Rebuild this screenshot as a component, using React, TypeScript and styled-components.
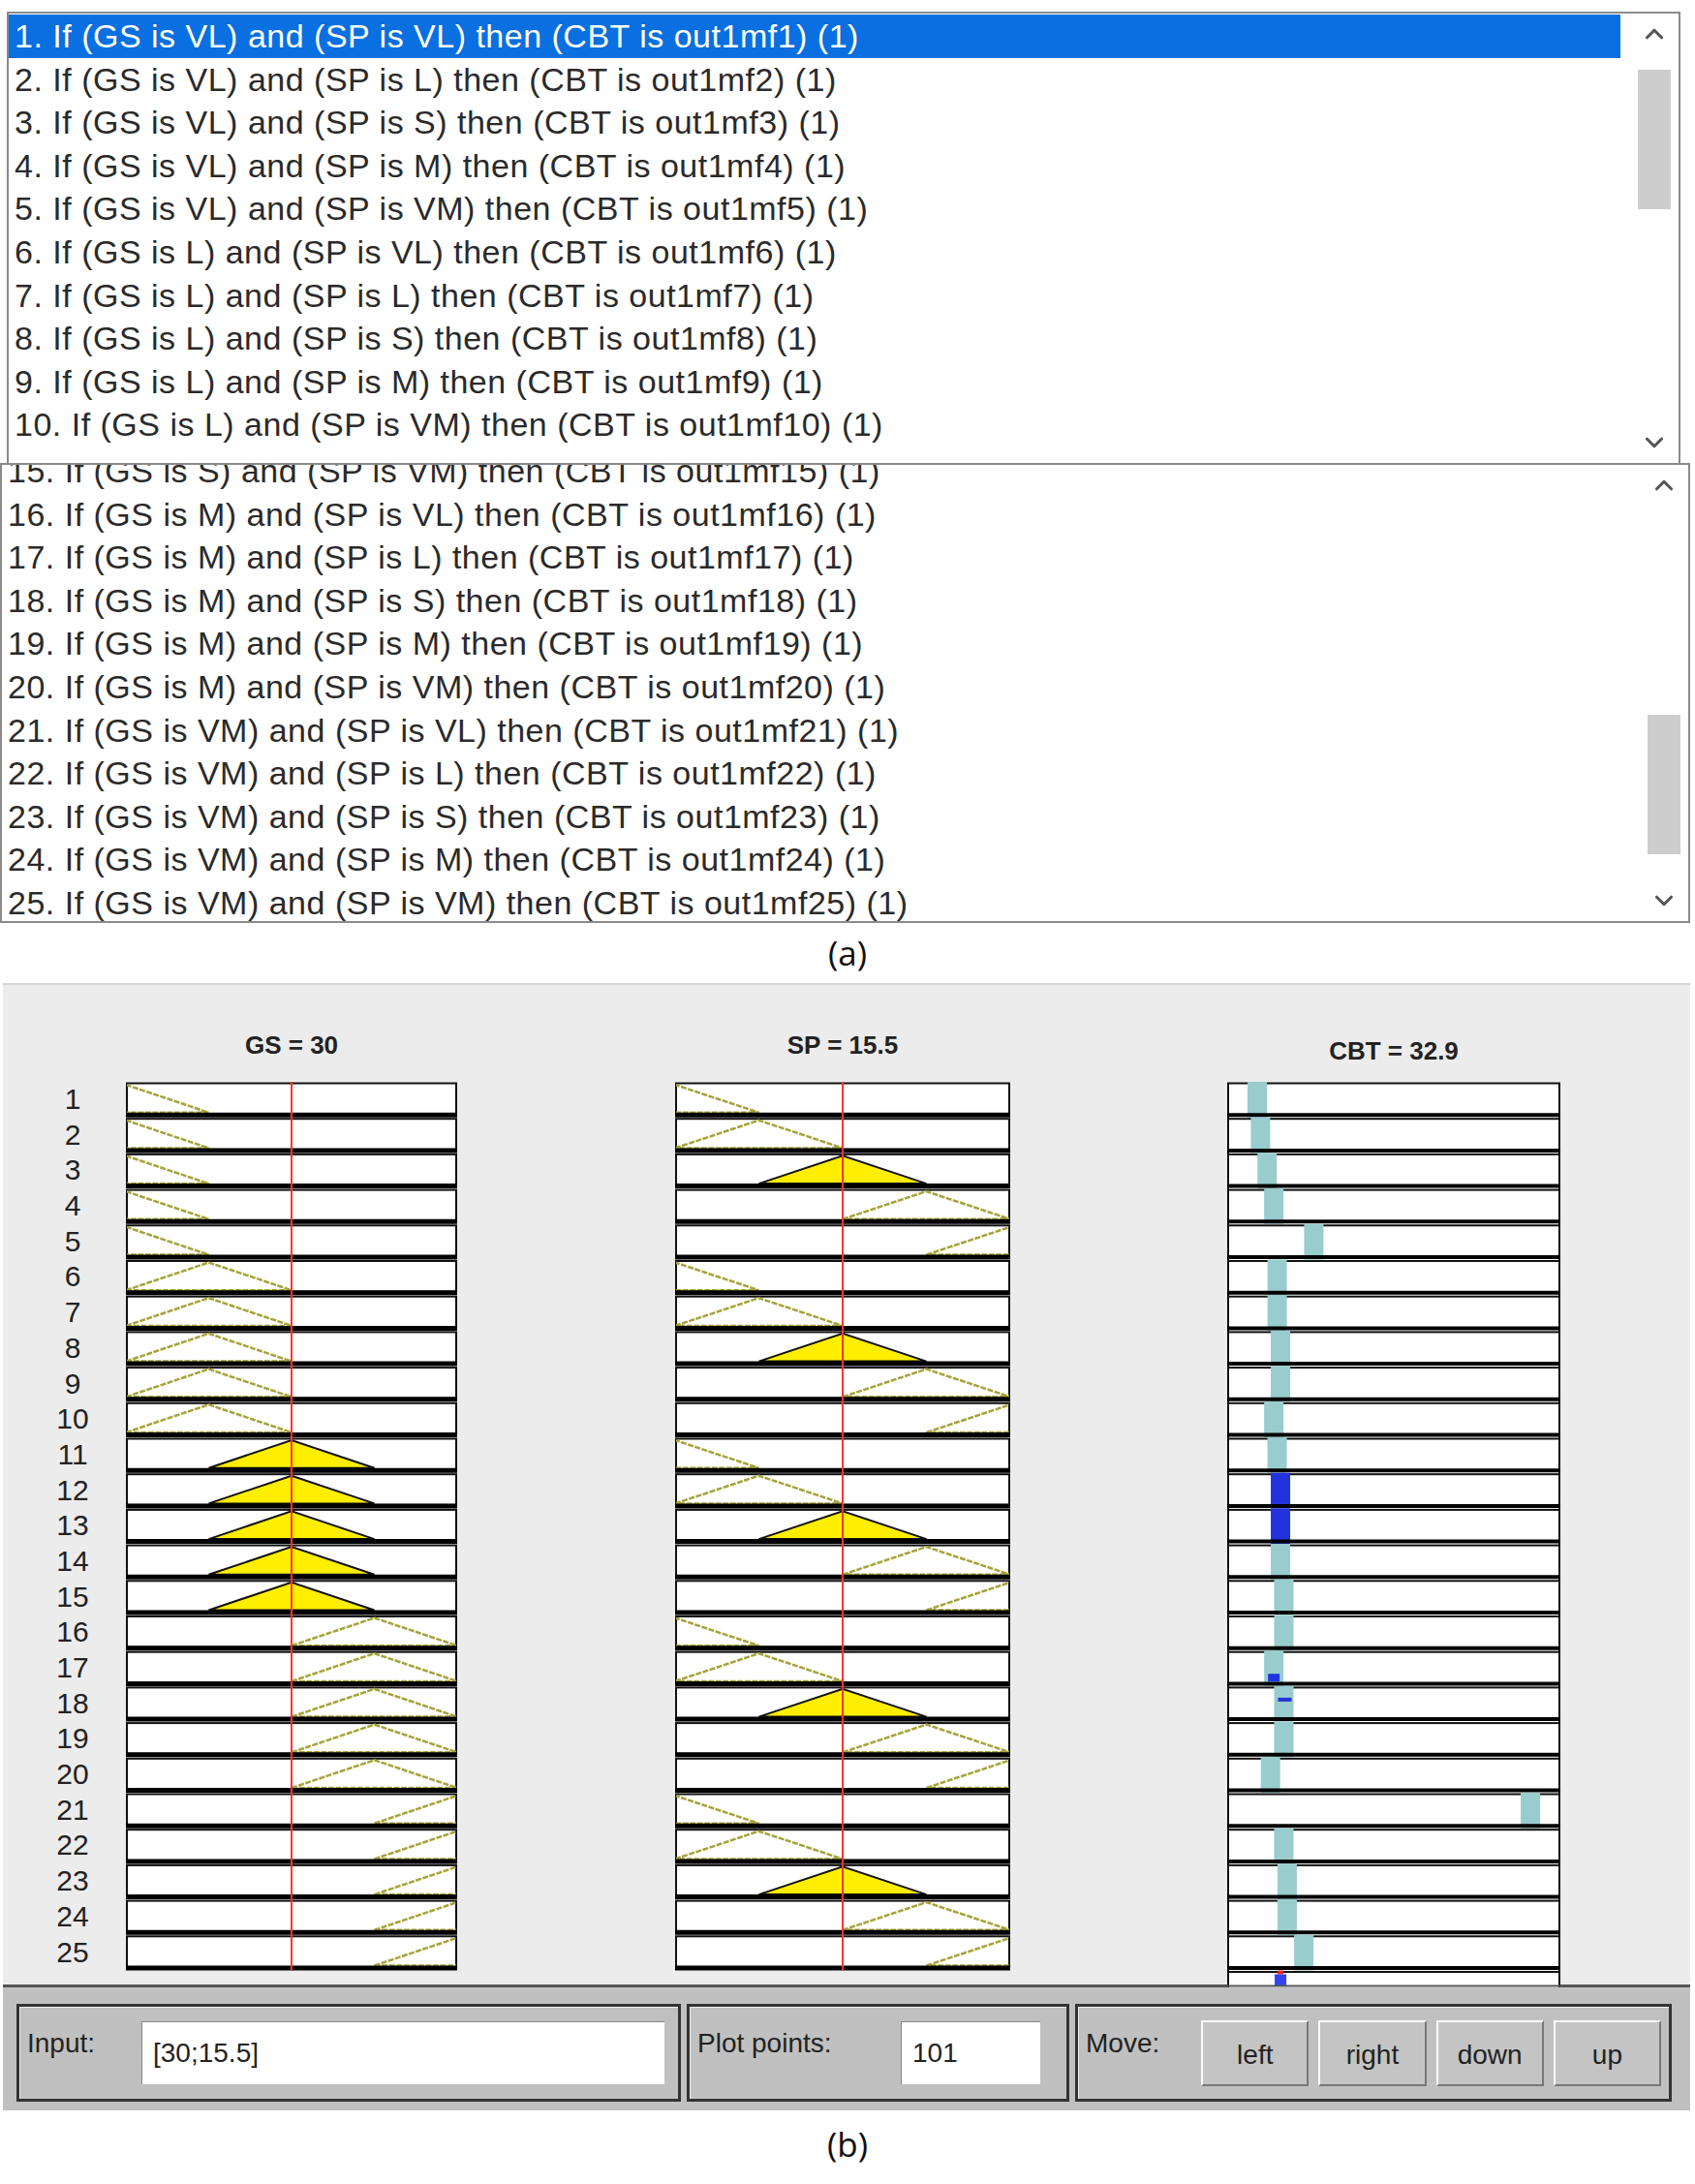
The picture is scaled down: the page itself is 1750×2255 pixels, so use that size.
import React from "react";
import styled, { createGlobalStyle } from "styled-components";
import { ChevronUp, ChevronDown } from "lucide-react";

const Global = createGlobalStyle`
  body { margin: 0; background: #fff; font-family: "Liberation Sans", Arial, sans-serif; }
`;

const GS = ["VL", "VL", "VL", "VL", "VL", "L", "L", "L", "L", "L", "S", "S", "S", "S", "S", "M", "M", "M", "M", "M", "VM", "VM", "VM", "VM", "VM"];
const SPS = ["VL", "L", "S", "M", "VM"];
const rule = (i: number) =>
  `${i + 1}. If (GS is ${GS[i]}) and (SP is ${SPS[i % 5]}) then (CBT is out1mf${i + 1}) (1)`;

const ROW = 44.6;
const PITCH = 36.7;

const Page = styled.div`
  width: 1750px;
  height: 2255px;
  padding-top: 12px;
  box-sizing: border-box;
  overflow: hidden;
`;

const ListBox = styled.div<{ $left: number; $width: number; $height: number; $offset: number }>`
  position: relative;
  margin-left: ${(p) => p.$left}px;
  width: ${(p) => p.$width}px;
  height: ${(p) => p.$height}px;
  border: 2px solid #8a8a8a;
  box-sizing: border-box;
  background: #fff;
  overflow: hidden;
  display: flex;
  & > .rows { flex: 1; margin-top: ${(p) => p.$offset}px; }
`;

const Row = styled.div<{ $sel?: boolean }>`
  height: ${ROW}px;
  line-height: ${ROW}px;
  padding-left: 6px;
  font-size: 34px;
  letter-spacing: 0.5px;
  white-space: nowrap;
  color: ${(p) => (p.$sel ? "#fff" : "#2a2a2a")};
  background: ${(p) => (p.$sel ? "#0a6fe0" : "transparent")};
  margin-right: ${(p) => (p.$sel ? 10 : 0)}px;
`;

const Scroll = styled.div<{ $thumbTop: number }>`
  width: 50px;
  position: relative;
  color: #555;
  display: flex;
  flex-direction: column;
  justify-content: space-between;
  align-items: center;
  padding: 6px 0;
  &::after {
    content: "";
    position: absolute;
    left: 8px;
    right: 8px;
    top: ${(p) => p.$thumbTop}px;
    height: 144px;
    background: #cdcdcd;
  }
`;

const Caption = styled.div`
  font-family: "Open Sans", sans-serif;
  font-size: 35px;
  text-align: center;
  height: 62px;
  line-height: 62px;
  color: #111;
`;

const Panel = styled.div`
  width: 1742px;
  margin-left: 3px;
  background: #ececec;
  border-top: 2px solid #d6d6d6;
`;

const Plots = styled.div`
  display: flex;
  align-items: flex-start;
  padding: 44px 0 0 42px;
  height: 1032px;
  box-sizing: border-box;
`;

const Labels = styled.div`
  width: 60px;
  margin: 56px 25px 0 0;
  display: flex;
  flex-direction: column;
`;

const Label = styled.div`
  height: ${PITCH}px;
  line-height: ${PITCH}px;
  text-align: center;
  font-size: 30px;
  color: #222;
`;

const Column = styled.div<{ $gap: number; $w: number }>`
  width: ${(p) => p.$w}px;
  margin-right: ${(p) => p.$gap}px;
  display: flex;
  flex-direction: column;
`;

const Title = styled.div<{ $dy?: number }>`
  height: 36px;
  line-height: 36px;
  margin: ${(p) => p.$dy ?? 0}px 0 ${(p) => 20 - (p.$dy ?? 0)}px;
  text-align: center;
  font-weight: bold;
  font-size: 26px;
  color: #222;
`;

const Bar = styled.div`
  background: #c0c0c0;
  border-top: 3px solid #555;
  height: 130px;
  display: flex;
  gap: 6px;
  padding: 17px 17px 0 14px;
  box-sizing: border-box;
`;

const Group = styled.div<{ $w: number }>`
  width: ${(p) => p.$w}px;
  height: 101px;
  border: 3px solid #333;
  box-shadow: inset 1px 1px 0 #eee;
  box-sizing: border-box;
  display: flex;
  align-items: center;
  padding: 0 8px;
  gap: 10px;
  font-size: 28px;
  color: #222;
`;

const GLabel = styled.span<{ $w: number }>`
  width: ${(p) => p.$w}px;
  align-self: flex-start;
  margin-top: 22px;
`;

const Field = styled.div<{ $w: number }>`
  width: ${(p) => p.$w}px;
  height: 65px;
  background: #fff;
  line-height: 65px;
  padding-left: 12px;
  box-sizing: border-box;
  font-size: 28px;
  box-shadow: inset 1px 1px 0 #888;
`;

const Btn = styled.div`
  width: 112px;
  height: 68px;
  line-height: 68px;
  text-align: center;
  background: #c4c4c4;
  border: 2px solid;
  border-color: #fafafa #777 #777 #fafafa;
  box-sizing: border-box;
  font-size: 28px;
`;

const W = 342;
const H = 25 * PITCH;

function MFPlot({ mf, active, w }: { mf: (i: number) => number; active: number; w: number }) {
  const rows = [];
  for (let i = 0; i < 25; i++) {
    const y0 = i * PITCH;
    const top = y0 + 3;
    const bot = y0 + PITCH - 5;
    const c = mf(i) * 0.25;
    const pts = [c - 0.25, c, c + 0.25].map((f, k) => `${f * w},${k === 1 ? top : bot}`).join(" ");
    const on = mf(i) === active;
    rows.push(
      <g key={i}>
        <rect x={1} y={y0 + 1.5} width={w - 2} height={PITCH - 5} fill="#fff" stroke="#111" strokeWidth={2} />
        <clipPath id={`c${w}${i}`}>
          <rect x={1} y={y0} width={w - 2} height={PITCH} />
        </clipPath>
        <polygon
          points={pts}
          clipPath={`url(#c${w}${i})`}
          fill={on ? "#ffee00" : "none"}
          stroke={on ? "#111" : "#a5a33a"}
          strokeWidth={on ? 2 : 2.5}
          strokeDasharray={on ? undefined : "6 1.5"}
        />
        <line x1={0} x2={w} y1={y0 + PITCH - 2.5} y2={y0 + PITCH - 2.5} stroke="#000" strokeWidth={5} />
      </g>
    );
  }
  return (
    <svg width={w} height={H}>
      {rows}
      <line x1={w / 2} x2={w / 2} y1={0} y2={H} stroke="#f33" strokeWidth={2} />
    </svg>
  );
}

const CBT = [0.09, 0.1, 0.12, 0.14, 0.26, 0.15, 0.15, 0.16, 0.16, 0.14, 0.15, 0.16, 0.16, 0.16, 0.17, 0.17, 0.14, 0.17, 0.17, 0.13, 0.91, 0.17, 0.18, 0.18, 0.23];

function OutPlot() {
  const w = 344;
  const h = H + 17;
  return (
    <svg width={w} height={h}>
      {Array.from({ length: 26 }, (_, i) => {
        const y0 = i * PITCH;
        return (
          <g key={i}>
            <rect x={1} y={y0 + 1.5} width={w - 2} height={PITCH + 10} fill="#fff" stroke="#111" strokeWidth={2} />
            {i < 25 && (
              <rect
                x={CBT[i] * w - 10}
                y={y0}
                width={20}
                height={PITCH}
                fill={i === 11 || i === 12 ? "#2233dd" : "#99cccc"}
              />
            )}
            {i < 25 && <line x1={0} x2={w} y1={y0 + PITCH - 2.5} y2={y0 + PITCH - 2.5} stroke="#000" strokeWidth={4} />}
          </g>
        );
      })}
      <rect x={CBT[16] * w - 6} y={16 * PITCH + 24} width={12} height={8} fill="#2233dd" />
      <rect x={CBT[17] * w - 6} y={17 * PITCH + 12} width={14} height={4} fill="#2233dd" />
      <rect x={0.16 * w - 6} y={25 * PITCH + 4} width={12} height={12} fill="#3344ee" />
      <rect x={0.16 * w - 3} y={25 * PITCH} width={6} height={4} fill="#e22" />
      <line x1={0} x2={w} y1={h - 1} y2={h - 1} stroke="#555" strokeWidth={2} />
    </svg>
  );
}

export default function App() {
  const first = Array.from({ length: 10 }, (_, i) => i);
  const second = Array.from({ length: 11 }, (_, i) => i + 14);
  return (
    <Page>
      <Global />
      <ListBox $left={7} $width={1728} $height={468} $offset={1}>
        <div className="rows">
          {first.map((i) => (
            <Row key={i} $sel={i === 0}>{rule(i)}</Row>
          ))}
        </div>
        <Scroll $thumbTop={58}>
          <ChevronUp size={30} strokeWidth={2.5} />
          <ChevronDown size={30} strokeWidth={2.5} />
        </Scroll>
      </ListBox>
      <ListBox $left={0} $width={1745} $height={475} $offset={-16} style={{ marginTop: -2 }}>
        <div className="rows">
          {second.map((i) => (
            <Row key={i}>{rule(i)}</Row>
          ))}
        </div>
        <Scroll $thumbTop={258}>
          <ChevronUp size={30} strokeWidth={2.5} />
          <ChevronDown size={30} strokeWidth={2.5} />
        </Scroll>
      </ListBox>
      <Caption>(a)</Caption>
      <Panel>
        <Plots>
          <Labels>
            {Array.from({ length: 25 }, (_, i) => (
              <Label key={i}>{i + 1}</Label>
            ))}
          </Labels>
          <Column $w={W} $gap={225}>
            <Title>GS = 30</Title>
            <MFPlot w={W} mf={(i) => Math.floor(i / 5)} active={2} />
          </Column>
          <Column $w={346} $gap={224}>
            <Title>SP = 15.5</Title>
            <MFPlot w={346} mf={(i) => i % 5} active={2} />
          </Column>
          <Column $w={344} $gap={0}>
            <Title $dy={6}>CBT = 32.9</Title>
            <OutPlot />
          </Column>
        </Plots>
        <Bar>
          <Group $w={686}>
            <GLabel $w={108}>Input:</GLabel>
            <Field $w={540}>[30;15.5]</Field>
          </Group>
          <Group $w={395}>
            <GLabel $w={200}>Plot points:</GLabel>
            <Field $w={144}>101</Field>
          </Group>
          <Group $w={616}>
            <GLabel $w={110}>Move:</GLabel>
            <Btn>left</Btn>
            <Btn>right</Btn>
            <Btn>down</Btn>
            <Btn>up</Btn>
          </Group>
        </Bar>
      </Panel>
      <Caption style={{ height: 70, lineHeight: "70px" }}>(b)</Caption>
    </Page>
  );
}
